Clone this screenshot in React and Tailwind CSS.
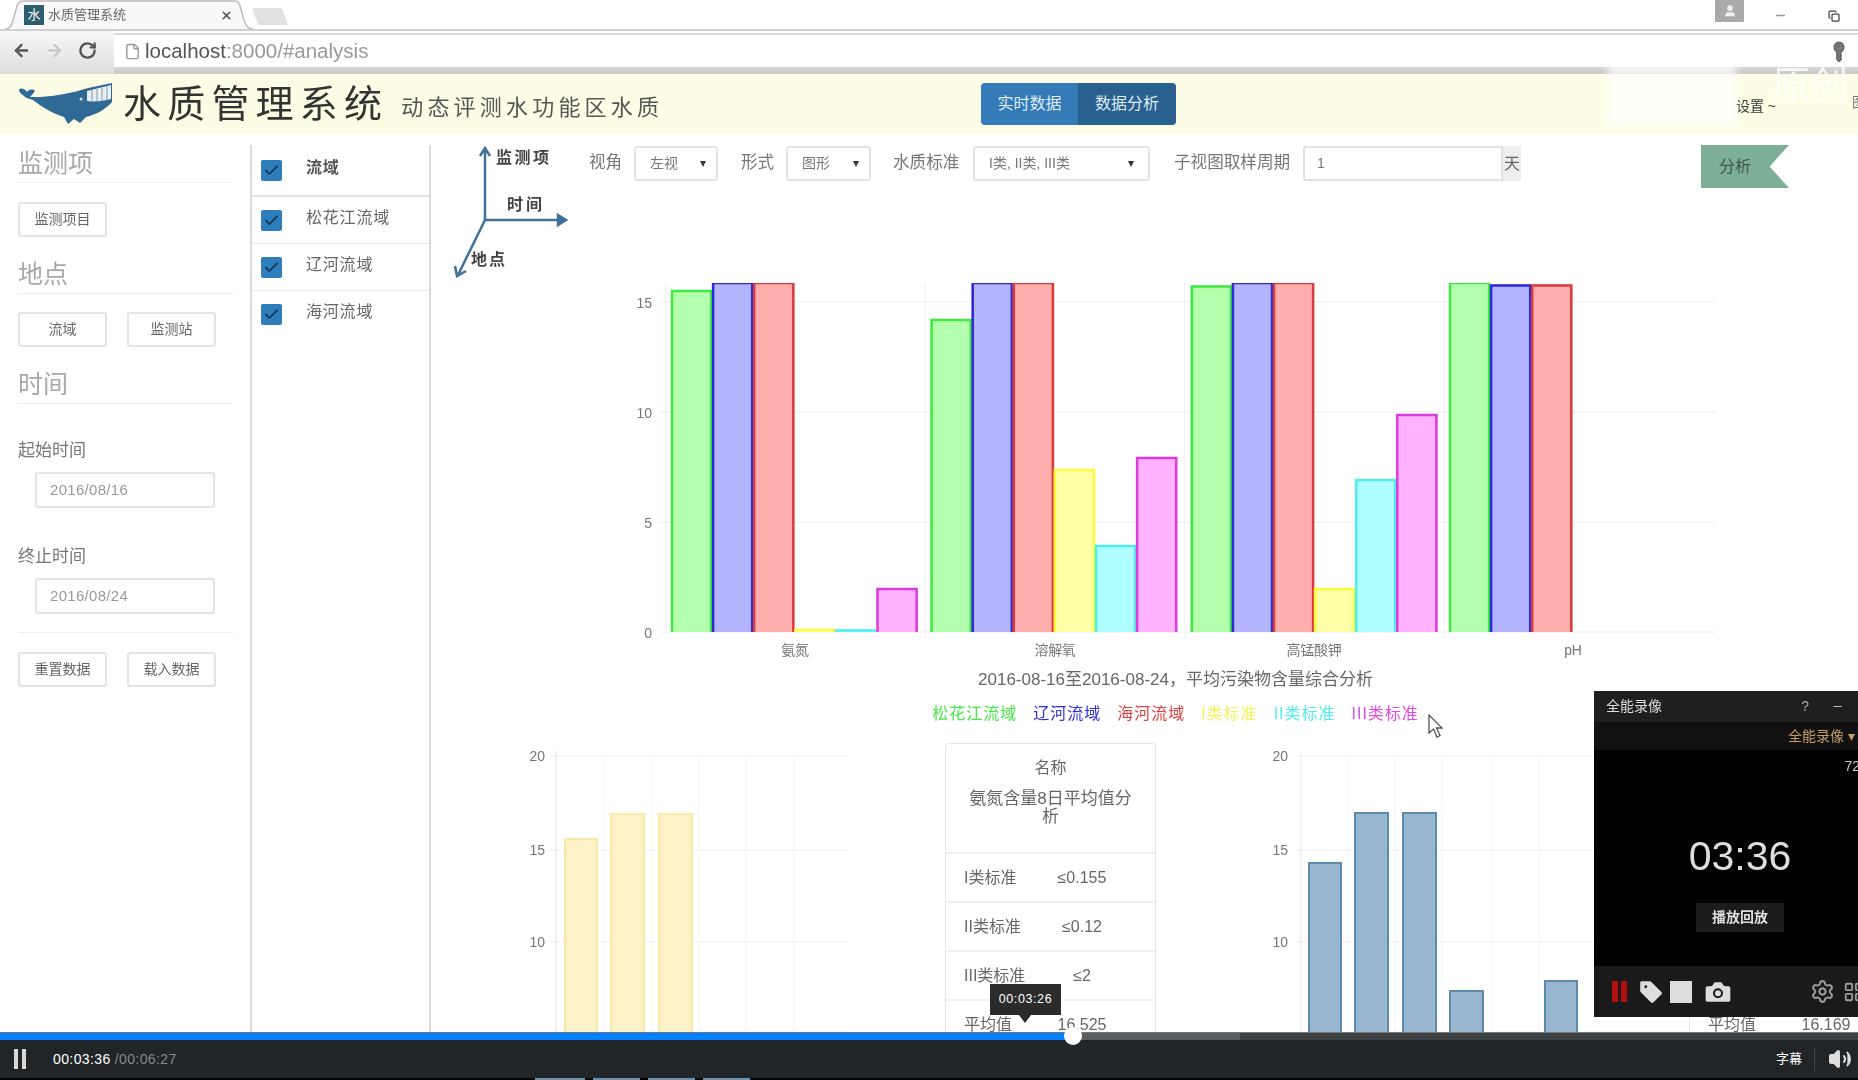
import React from 'react';
import { ArrowLeft, ArrowRight, RotateCw, File, Check, X, Minus, User, KeyRound, Volume2, Settings, Tag, Camera, Copy, LayoutGrid } from 'lucide-react';

const font = "font-['Liberation_Sans','Noto_Sans_CJK_SC',sans-serif]";

const series = [
  { fill: '#b4ffae', stroke: '#3fe83f' },
  { fill: '#b3b3ff', stroke: '#2a2ad8' },
  { fill: '#ffaeae', stroke: '#dc3a3a' },
  { fill: '#ffffa8', stroke: '#fbfb3c' },
  { fill: '#b0ffff', stroke: '#4eeeee' },
  { fill: '#ffb2ff', stroke: '#dc3cdc' },
];

const Y0 = 632 - 280;
const TOP = 283 - 280;
const groups = [
  { x: 671 - 431, vals: [290, 282, 282, 629, 629.5, 588] },
  { x: 930.6 - 431, vals: [319, 282, 282, 469, 545, 457] },
  { x: 1190.8 - 431, vals: [285.6, 282, 282, 588, 479, 414] },
  { x: 1449 - 431, vals: [282, 284.5, 284.5] },
];

function BarPath({ x, w, top, bottom, fill, stroke, sw = 2.5 }) {
  return (
    <g>
      <rect x={x} y={top} width={w} height={bottom - top} fill={fill} />
      <path d={`M${x + 1} ${bottom}V${top + 1}H${x + w - 1}V${bottom}`} fill="none" stroke={stroke} strokeWidth={sw} />
    </g>
  );
}

function MainChart() {
  const w = 41.1;
  return (
    <svg width="1427" height="380" className="block shrink-0">
      {[15, 10, 5, 0].map((v) => {
        const y = Y0 - v * 22;
        return (
          <g key={v}>
            <line x1="228" x2="1285" y1={y} y2={y} stroke="#eeeeee" />
            <text x="221" y={y + 6} textAnchor="end" fontSize="14" fill="#777">{v}</text>
          </g>
        );
      })}
      {[235, 494, 754, 1013].map((x) => (
        <line key={x} x1={x} x2={x} y1={TOP} y2={Y0 + 6} stroke="#efefef" />
      ))}
      {groups.map((g, gi) =>
        g.vals.map((t, i) => {
          const top = t - 280;
          return (
            <BarPath
              key={`${gi}-${i}`}
              x={g.x + i * w}
              w={w}
              top={Math.max(top, TOP - 2)}
              bottom={Y0}
              fill={series[i].fill}
              stroke={series[i].stroke}
            />
          );
        })
      )}
      <rect x="228" y="0" width="1100" height={TOP} fill="#fff" />
      {[['氨氮', 364], ['溶解氧', 624], ['高锰酸钾', 883], ['pH', 1142]].map(([t, x]) => (
        <text key={t} x={x} y="375" textAnchor="middle" fontSize="14" fill="#777" letterSpacing="-0.3">{t}</text>
      ))}
    </svg>
  );
}

function SmallChart({ width, axis, labelX, right, gridV, bars, fill, stroke }) {
  const rows = [[20, 13], [15, 107], [10, 199], [5, 289]];
  return (
    <svg width={width} height="289" className="block shrink-0">
      {rows.map(([v, y]) => (
        <g key={v}>
          <line x1={axis - 6} x2={right} y1={y} y2={y} stroke="#f1f1f1" />
          {v !== 5 && <text x={labelX} y={y + 5} textAnchor="end" fontSize="14" fill="#777">{v}</text>}
        </g>
      ))}
      <line x1={axis} x2={axis} y1="8" y2="289" stroke="#e8e8e8" />
      {gridV.map((x) => (
        <line key={x} x1={x} x2={x} y1="13" y2="289" stroke="#f4f4f4" />
      ))}
      {bars.map(([x, w, top]) => (
        <BarPath key={x} x={x} w={w} top={top} bottom={289} fill={fill} stroke={stroke} sw={2} />
      ))}
    </svg>
  );
}

function Card({ title, name, rows }) {
  return (
    <div className="w-[211px] shrink-0 border border-[#e6e6e6] rounded-t-[3px] text-[16px] text-[#666]">
      <div className="h-[110px] px-[20px] pt-[13px] text-center text-[17px] leading-[18px] border-b-2 border-[#eeeeee]">
        <div className="text-[16px] leading-[22px] mb-[11px]">{name}</div>
        <div>{title}</div>
      </div>
      {rows.map(([a, b], i) => (
        <div key={i} className="h-[49px] grid grid-cols-[76px_84px] items-center pl-[18px] border-b-2 border-[#f0f0f0]">
          <span className="whitespace-nowrap">{a}</span>
          <span className="text-center">{b}</span>
        </div>
      ))}
    </div>
  );
}

function Btn({ children, className = '' }) {
  return (
    <div className={`h-[35px] w-[89px] shrink-0 flex items-center justify-center border-2 border-[#e4e4e4] rounded-[3px] text-[14px] text-[#666] ${className}`}>
      {children}
    </div>
  );
}

function Heading({ children, className = '' }) {
  return (
    <div className={`h-[38px] flex items-center border-b border-[#eeeeee] text-[25px] text-[#a8a8a8] ${className}`}>
      {children}
    </div>
  );
}

function DateInput({ value }) {
  return (
    <div className="ml-[17px] w-[180px] h-[36px] flex items-center pl-[13px] border-2 border-[#e4e4e4] rounded-[3px] text-[15px] tracking-[0.3px] text-[#999]">
      {value}
    </div>
  );
}

function Sidebar() {
  return (
    <aside className="w-[252px] shrink-0 pl-[18px] pr-[17px] border-r-2 border-[#dddddd]">
      <Heading>监测项</Heading>
      <Btn className="mt-[19px]">监测项目</Btn>
      <Heading className="mt-[19px]">地点</Heading>
      <div className="flex gap-[20px] mt-[18px]">
        <Btn>流域</Btn>
        <Btn>监测站</Btn>
      </div>
      <Heading className="mt-[19px]">时间</Heading>
      <div className="mt-[37px] h-[20px] flex items-center text-[17px] text-[#777]">起始时间</div>
      <div className="mt-[11px]"><DateInput value="2016/08/16" /></div>
      <div className="mt-[39px] h-[20px] flex items-center text-[17px] text-[#777]">终止时间</div>
      <div className="mt-[11px]"><DateInput value="2016/08/24" /></div>
      <div className="mt-[18px] border-b border-[#eeeeee]" />
      <div className="flex gap-[20px] mt-[19px]">
        <Btn>重置数据</Btn>
        <Btn>载入数据</Btn>
      </div>
    </aside>
  );
}

function Checkbox() {
  return (
    <span className="w-[21px] h-[21px] shrink-0 flex items-center justify-center rounded-[2px] bg-[#2e7ebd]">
      <Check size={17} strokeWidth={2.5} className="text-[#123a5c]" />
    </span>
  );
}

function ListPanel() {
  const rows = ['松花江流域', '辽河流域', '海河流域'];
  return (
    <div className="w-[179px] shrink-0 border-r-2 border-[#dddddd]">
      <div className="h-[52px] flex items-center pl-[9px] gap-[24px] border-b-2 border-[#e2e2e2]">
        <Checkbox />
        <span className="mb-[4px] text-[16px] font-bold text-[#555] tracking-[0.8px]">流域</span>
      </div>
      {rows.map((r, i) => (
        <div key={r} className={`h-[47px] flex items-center pl-[9px] gap-[24px] ${i < 2 ? 'border-b border-[#e8e8e8]' : ''}`}>
          <Checkbox />
          <span className="mb-[5px] text-[16px] text-[#666] tracking-[0.8px]">{r}</span>
        </div>
      ))}
    </div>
  );
}

function AxisDiagram() {
  return (
    <div className="relative w-[130px] h-[135px] shrink-0 ml-[19px] text-[16px] font-bold text-[#444]">
      <svg width="130" height="135" className="block" fill="none" stroke="#3f7199" strokeWidth="2.5">
        <path d="M35 75V5M30 11L35 3L40 11" />
        <path d="M35 75H110" />
        <path d="M108 70L116 75L108 80Z" fill="#3f7199" />
        <path d="M35 75L8 130M5 121L7 131L16 126" />
      </svg>
      <span className="absolute left-[46px] top-[1px] tracking-[2.5px] whitespace-nowrap">监测项</span>
      <span className="absolute left-[57px] top-[48px] tracking-[3px] whitespace-nowrap">时间</span>
      <span className="absolute left-[21px] top-[103px] tracking-[2px] whitespace-nowrap">地点</span>
    </div>
  );
}

function Select({ width, text, arrow = 10 }) {
  return (
    <div className="h-[35px] flex items-center justify-between border-2 border-[#e2e2e2] rounded-[3px] text-[14px] text-[#777] pl-[14px]" style={{ width, paddingRight: arrow }}>
      <span>{text}</span>
      <span className="w-0 h-0 border-x-[3.5px] border-x-transparent border-t-[6px] border-t-[#333]" />
    </div>
  );
}

function FilterRow() {
  return (
    <div className="flex items-center mt-[1px] ml-[9px] text-[16.6px] text-[#777]">
      <span className="w-[45px]">视角</span>
      <Select width={84} text="左视" />
      <span className="w-[45px] ml-[23px]">形式</span>
      <Select width={85} text="图形" />
      <span className="w-[80px] ml-[22px]">水质标准</span>
      <Select width={177} text="I类, II类, III类" arrow={14} />
      <span className="w-[129px] ml-[24px] whitespace-nowrap">子视图取样周期</span>
      <div className="w-[200px] h-[35px] flex items-center pl-[12px] border-2 border-[#e2e2e2] rounded-l-[3px] text-[14px] text-[#777]">1</div>
      <div className="w-[18px] h-[35px] flex items-center justify-center bg-[#eeeeee] text-[16px] text-[#666]">天</div>
    </div>
  );
}

function Legend() {
  const items = [
    ['松花江流域', '#45e845'], ['辽河流域', '#3030d8'], ['海河流域', '#e04040'],
    ['I类标准', '#f4f45a'], ['II类标准', '#50eeee'], ['III类标准', '#e048e0'],
  ];
  return (
    <div className="h-[28px] flex items-center justify-center gap-[16px] text-[16px]">
      {items.map(([t, c]) => (
        <span key={t} style={{ color: c }} className="tracking-[1px]">{t}</span>
      ))}
    </div>
  );
}

function Content() {
  return (
    <div className="flex-1 min-w-0 overflow-hidden">
      <div className="flex items-start h-[135px]">
        <AxisDiagram />
        <FilterRow />
        <div className="ml-auto mr-[69px] w-[88px] h-[43px] flex items-center pl-[18px] bg-[#7daf97] text-[16px] text-[#3e5a4c] [clip-path:polygon(0_0,100%_0,78%_50%,100%_100%,0_100%)]">
          分析
        </div>
      </div>
      <MainChart />
      <div className="pl-[62px]">
        <div className="h-[40px] flex items-center justify-center text-[17px] text-[#666]">2016-08-16至2016-08-24，平均污染物含量综合分析</div>
        <Legend />
      </div>
      <div className="flex mt-[15px]">
        <div className="w-[514px] shrink-0">
          <SmallChart
            width={514}
            axis={125}
            labelX={114}
            right={417}
            gridV={[173, 221, 268, 315, 363]}
            bars={[[133, 34, 95], [179, 35, 70], [227, 35, 70]]}
            fill="#fdf1c8"
            stroke="#f9e8a8"
          />
        </div>
        <Card
          name="名称"
          title="氨氮含量8日平均值分析"
          rows={[['I类标准', '≤0.155'], ['II类标准', '≤0.12'], ['III类标准', '≤2'], ['平均值', '16.525']]}
        />
        <div className="w-[533px] shrink-0">
          <SmallChart
            width={533}
            axis={145}
            labelX={132}
            right={533}
            gridV={[192, 239, 286, 336, 383]}
            bars={[[152, 34, 119], [198, 35, 69], [246, 35, 69], [293, 35, 247], [388, 34, 237]]}
            fill="#98b6cf"
            stroke="#5c8bac"
          />
        </div>
        <Card
          name=""
          title=""
          rows={[['', ''], ['', ''], ['', ''], ['平均值', '16.169']]}
        />
      </div>
    </div>
  );
}

function Whale() {
  return (
    <svg width="94" height="44" viewBox="0 0 94 44" className="shrink-0">
      <path d="M1 8C3 5 7 7 9 10C11 7 15 7 17 9C15 12 13 14 12 15L22 15C38 14 54 11 70 6L94 1V20C86 29 76 33 68 35L62 41L56 37L50 42L46 35C33 31 23 24 15 18C11 17 6 15 5 13C3 12 1 10 1 8Z" fill="#2f6a97" />
      <path d="M69 9L93 3V17C86 19 76 20 69 19Z" fill="#e9eef0" />
      <path d="M74 8V19M79 7V19M84 6V19M89 4V18" stroke="#8a9aa6" strokeWidth="1" />
      <circle cx="63" cy="17" r="1.5" fill="#dce6ee" />
    </svg>
  );
}

function BrowserChrome() {
  return (
    <div className="shrink-0 h-[74px]">
      <div className="relative h-[29px] flex bg-white">
        <div className="relative w-[248px] h-[29px] ml-[5px] flex items-center">
          <svg width="248" height="29" className="absolute inset-0">
            <path d="M0 29C6 29 7 24 9 17L12 6C13 2 15 1 19 1H229C233 1 234 2 235 6L239 20C241 26 243 29 248 29" fill="#f8f8f8" stroke="#bcbcbc" strokeWidth="1.5" />
          </svg>
          <span className="relative ml-[19px] w-[20px] h-[20px] flex items-center justify-center bg-[#2f5d70] text-[13px] text-white">水</span>
          <span className="relative ml-[4px] text-[13px] text-[#666]">水质管理系统</span>
          <X size={13} strokeWidth={3} className="absolute right-[20px] top-[9px] text-[#555]" />
        </div>
        <div className="ml-[2px] mt-[8px] w-[30px] h-[17px] bg-[#dfe1e3] rounded-[2px] skew-x-[20deg]" />
        <div className="ml-auto flex items-start pr-[18px]">
          <div className="w-[29px] h-[22px] flex items-center justify-center bg-[#aaaaaa]">
            <User size={14} fill="#eee" stroke="#eee" />
          </div>
          <Minus size={13} strokeWidth={2.5} className="ml-[30px] mt-[9px] text-[#999]" />
          <Copy size={12} strokeWidth={2.5} className="ml-[41px] mt-[10px] text-[#444]" />
        </div>
      </div>
      <div className="h-[45px] flex border-t-2 border-[#cfcfcf]">
        <div className="w-[114px] shrink-0 flex items-center gap-[14px] pl-[12px] pb-[4px] bg-gradient-to-b from-[#f7f7f7] to-[#dedede] text-[#555]">
          <ArrowLeft size={19} strokeWidth={3} />
          <ArrowRight size={19} strokeWidth={2.5} className="text-[#c4c4c4]" />
          <RotateCw size={19} strokeWidth={3} />
        </div>
        <div className="flex-1 flex flex-col">
          <div className="mt-[2px] flex-1 flex items-center pl-[10px] border-t-2 border-[#dcdcdc] bg-white">
            <File size={17} className="text-[#999]" />
            <span className="ml-[4px] text-[20.5px] text-[#555]">localhost<span className="text-[#999]">:8000/#analysis</span></span>
            <KeyRound size={18} fill="#777" className="ml-auto mr-[10px] -rotate-45 text-[#666]" />
          </div>
          <div className="h-[7px] bg-gradient-to-b from-[#d8d8d8] to-[#c8c8c8]" />
        </div>
      </div>
    </div>
  );
}

function Header() {
  return (
    <header className="shrink-0 h-[60px] flex items-center bg-[#fdfde6] overflow-hidden">
      <div className="w-[981px] shrink-0 flex items-center pl-[18px]">
        <Whale />
        <span className="ml-[11px] text-[38px] leading-none tracking-[6.2px] text-[#333]">水质管理系统</span>
        <span className="ml-[13px] mt-[8px] text-[22px] leading-none tracking-[4.2px] text-[#555]">动态评测水功能区水质</span>
      </div>
      <div className="flex h-[42px] rounded-[4px] overflow-hidden text-[16px] text-[#dfeaf3]">
        <span className="w-[97px] flex items-center justify-center bg-[#337ab7]">实时数据</span>
        <span className="w-[98px] flex items-center justify-center bg-[#286090]">数据分析</span>
      </div>
      <span className="ml-auto mt-[4px] text-[14px] text-[#333] whitespace-nowrap">设置 ~</span>
      <span className="ml-[76px] mr-[-8px] mt-[-4px] text-[14px] text-[#777]">图</span>
    </header>
  );
}

function RecordWidget() {
  return (
    <div className="absolute left-[1594px] top-[691px] w-[264px] h-[326px] flex flex-col overflow-hidden bg-black text-white blur-[0.5px]">
      <div className="h-[31px] flex items-center pl-[12px] bg-[#1f1f1f] text-[14px] text-[#ddd]">
        全能录像
        <span className="ml-auto text-[#aaa]">?</span>
        <Minus size={13} className="ml-[22px] mr-[14px] text-[#bbb]" />
      </div>
      <div className="h-[28px] flex items-center justify-end pr-[3px] bg-[#111111] text-[14px] text-[#c59f68]">全能录像 ▾</div>
      <div className="flex-1 flex flex-col items-center relative pl-[28px]">
        <span className="absolute right-[-2px] top-[6px] text-[14px] text-[#ccc]">72</span>
        <span className="mt-[82px] text-[41px] leading-[48px] text-[#dddddd]">03:36</span>
        <span className="mt-[23px] w-[88px] h-[29px] flex items-center justify-center bg-[#1c1c1c] text-[14px] font-bold text-[#ddd]">播放回放</span>
      </div>
      <div className="h-[51px] flex items-center pl-[18px] bg-[#1a1a1a]">
        <span className="w-[6px] h-[21px] shrink-0 bg-[#b01010]" />
        <span className="ml-[3px] w-[6px] h-[21px] shrink-0 bg-[#b01010]" />
        <Tag size={28} fill="#ddd" stroke="#1a1a1a" strokeWidth={1.5} className="ml-[10px] shrink-0" />
        <span className="ml-[5px] w-[22px] h-[22px] shrink-0 bg-[#dddddd]" />
        <Camera size={32} fill="#ddd" stroke="#1a1a1a" strokeWidth={1.5} className="ml-[10px] shrink-0" />
        <Settings size={25} className="ml-[76px] shrink-0 text-[#999]" />
        <LayoutGrid size={22} className="ml-[8px] shrink-0 text-[#999]" />
      </div>
    </div>
  );
}

function Player() {
  return (
    <div className="shrink-0 h-[48px] flex flex-col bg-black">
      <div className="h-[8px] flex border-t border-[#777] bg-[#3d4043]">
        <div className="w-[1073px] bg-[#0080ff]" />
        <div className="w-[167px] bg-[#5a5d60]" />
      </div>
      <div className="flex-1 flex items-center bg-[#212528] pl-[14px] pr-[6px] text-[14px]">
        <span className="w-[4px] h-[20px] bg-[#d8d8d8]" />
        <span className="ml-[4px] w-[4px] h-[20px] bg-[#d8d8d8]" />
        <span className="ml-[27px] text-white tracking-[0.4px]">00:03:36</span>
        <span className="ml-[4px] text-[#888] tracking-[0.4px]">/00:06:27</span>
        <span className="ml-auto text-[13px] text-white">字幕</span>
        <span className="ml-[12px] w-px h-[24px] bg-[#44484b]" />
        <Volume2 size={24} fill="#ddd" className="ml-[13px] text-[#ddd]" />
      </div>
      <div className="h-[2px] flex">
        <span className="ml-[535px] w-[50px] bg-[#6f93ad]" />
        <span className="ml-[8px] w-[47px] bg-[#6f93ad]" />
        <span className="ml-[8px] w-[47px] bg-[#6f93ad]" />
        <span className="ml-[8px] w-[47px] bg-[#6f93ad]" />
      </div>
    </div>
  );
}

export default function App() {
  return (
    <div className={`relative h-[1080px] overflow-hidden flex flex-col bg-white ${font}`}>
      <div className="flex-1 min-h-0 flex flex-col overflow-hidden blur-[0.6px]">
        <BrowserChrome />
        <Header />
        <main className="flex-1 min-h-0 flex pt-[11px]">
          <Sidebar />
          <ListPanel />
          <Content />
        </main>
      </div>
      <Player />

      <div className="absolute left-[1608px] top-[60px] w-[128px] h-[66px] bg-white/70 blur-[3px]" />
      <span className="absolute left-[1772px] top-[66px] text-[38px] leading-none text-white/80 whitespace-nowrap">原创</span>

      <svg width="17" height="25" viewBox="0 0 17 25" className="absolute left-[1428px] top-[714px]">
        <path d="M1 1V19L5.5 15L9 23L12 21.5L8.5 14H14Z" fill="#fff" stroke="#555" strokeWidth="1.3" />
      </svg>

      <RecordWidget />

      <div className="absolute left-[990px] top-[984px] w-[71px] h-[31px] flex items-center justify-center bg-[#2b2b2b] text-[12.5px] tracking-[0.6px] text-white">
        00:03:26
        <span className="absolute left-[29px] top-[31px] w-0 h-0 border-x-[6px] border-x-transparent border-t-[8px] border-t-[#2b2b2b]" />
      </div>
      <span className="absolute left-[1064px] top-[1027px] w-[18px] h-[18px] rounded-full bg-white" />
    </div>
  );
}
